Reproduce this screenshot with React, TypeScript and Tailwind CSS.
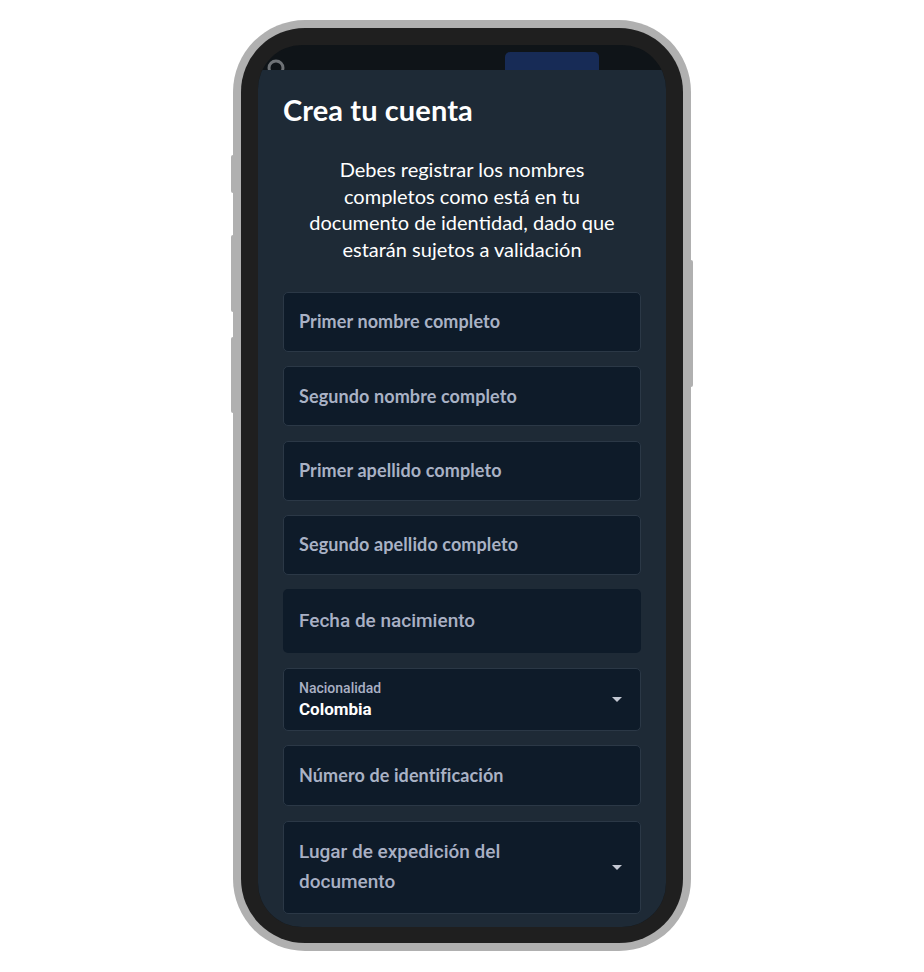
import React from "react"

const proxima = { fontFamily: "Lato, 'Open Sans', sans-serif" }
const roboto = { fontFamily: "Roboto, 'Noto Sans', sans-serif" }

function TextField({ label, h = "h-[60px]" }: { label: string; h?: string }) {
  return (
    <div className={`${h} shrink-0 rounded-[5px] border border-[#2b3846] bg-[#0e1b29] flex items-center px-[15px]`}>
      <span className="text-[18px] tracking-[0.1px] font-bold text-[#a9b2c5]" style={proxima}>
        {label}
      </span>
    </div>
  )
}

function Caret() {
  return (
    <svg width="10" height="5" viewBox="0 0 10 5" className="shrink-0">
      <path d="M0 0h10L5 5z" fill="#c3c8d2" />
    </svg>
  )
}

export default function App() {
  return (
    <div className="w-[924px] h-[972px] bg-white flex justify-center pt-[20px]">
      <div className="relative">
        {/* side buttons */}
        <div className="absolute left-[-2px] top-[135px] w-[3px] h-[38px] rounded-l-[2px] bg-[#b0b0b0]" />
        <div className="absolute left-[-2px] top-[215px] w-[3px] h-[77px] rounded-l-[2px] bg-[#b0b0b0]" />
        <div className="absolute left-[-2px] top-[317px] w-[3px] h-[76px] rounded-l-[2px] bg-[#b0b0b0]" />
        <div className="absolute right-[-2px] top-[240px] w-[3px] h-[127px] rounded-r-[2px] bg-[#b0b0b0]" />

        <div className="w-[458px] h-[931px] rounded-[72px] bg-[#b0b0b0] p-[8px]">
          <div className="w-full h-full rounded-[64px] bg-[#1f1f1f] pt-[17px] pb-[16px] px-[17px]">
            <div className="w-full h-full rounded-[44px] overflow-hidden bg-[#0f1418] flex flex-col">
              {/* status strip */}
              <div className="relative h-[25px] shrink-0">
                <svg width="24" height="20" viewBox="0 0 24 20" className="absolute left-[6px] top-[13px]">
                  <circle cx="12" cy="10" r="7" fill="none" stroke="#6e7276" strokeWidth="3" />
                </svg>
                <div className="absolute left-[247px] top-[7px] w-[94px] h-[30px] rounded-[5px] bg-[#172b56]" />
              </div>

              {/* modal panel */}
              <div className="relative flex-1 bg-[#1e2a36] px-[25px] flex flex-col">
                <h1
                  className="mt-[22px] text-[29px] leading-[36px] font-bold text-white tracking-[0.1px]"
                  style={proxima}
                >
                  Crea tu cuenta
                </h1>
                <p
                  className="mt-[28px] text-center text-[20px] leading-[26.7px] text-white"
                  style={proxima}
                >
                  Debes registrar los nombres
                  <br />
                  completos como está en tu
                  <br />
                  documento de identidad, dado que
                  <br />
                  estarán sujetos a validación
                </p>

                <div className="mt-[29px] flex flex-col gap-[14.4px]">
                  <TextField label="Primer nombre completo" />
                  <TextField label="Segundo nombre completo" />
                  <TextField label="Primer apellido completo" />
                  <TextField label="Segundo apellido completo" />

                  <div className="h-[64px] shrink-0 rounded-[5px] bg-[#0e1b29] flex items-center px-[16px]">
                    <span className="text-[19px] font-medium text-[#a9b0c4]" style={roboto}>
                      Fecha de nacimiento
                    </span>
                  </div>

                  <div className="h-[63px] shrink-0 rounded-[5px] border border-[#2b3846] bg-[#0e1b29] flex items-center px-[15px]">
                    <div className="flex-1 flex flex-col pt-[3px]" style={roboto}>
                      <span className="text-[14px] leading-[18px] font-medium text-[#a9b0c4]">Nacionalidad</span>
                      <span className="text-[17px] leading-[25px] font-bold text-white">Colombia</span>
                    </div>
                    <div className="mr-[3px]">
                      <Caret />
                    </div>
                  </div>

                  <TextField label="Número de identificación" h="h-[61px]" />

                  <div className="h-[93px] shrink-0 rounded-[5px] border border-[#2b3846] bg-[#0e1b29] flex items-center px-[15px]">
                    <div className="flex-1 text-[19px] leading-[30px] font-medium text-[#a9b0c4]" style={roboto}>
                      Lugar de expedición del
                      <br />
                      documento
                    </div>
                    <div className="mr-[3px]">
                      <Caret />
                    </div>
                  </div>
                </div>
              </div>
            </div>
          </div>
        </div>
      </div>
    </div>
  )
}
